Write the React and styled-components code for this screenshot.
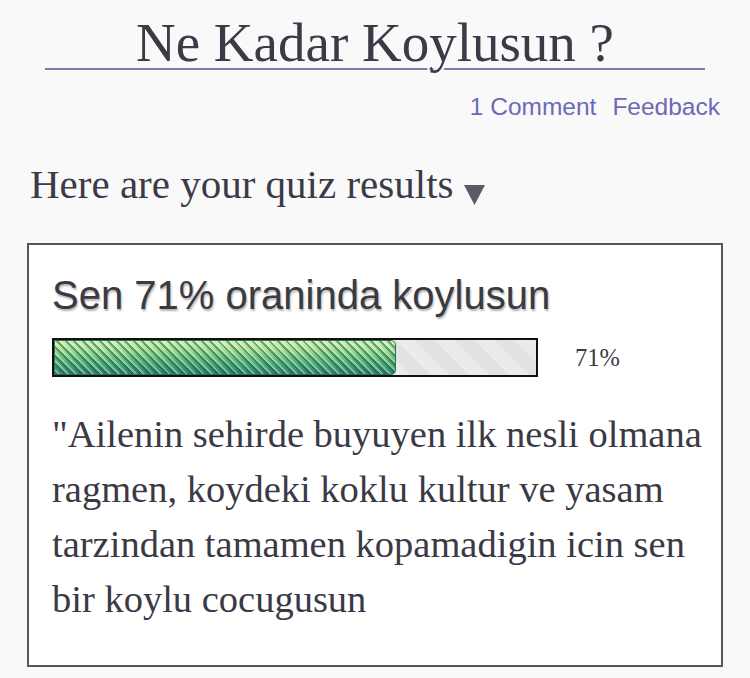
import styled, {createGlobalStyle} from "styled-components";

const GlobalStyle = createGlobalStyle`
    html, body {
        margin: 0;
        padding: 0;
        background: #f9f9fa;
    }
    body {
        font-family: "Liberation Serif", "Times New Roman", serif;
        color: #3b3a46;
    }
`;

const Page = styled.div`
    width: 750px;
    box-sizing: border-box;
    padding: 18px 27px 0 27px;
`;

const Title = styled.h1`
    margin: 0 18px;
    font-size: 55px;
    line-height: 50px;
    font-weight: normal;
    text-align: center;
    color: #3b3a46;
    border-bottom: 2px solid #7f7ca6;
    text-shadow: 3px 0 #f9f9fa, -3px 0 #f9f9fa;
`;

const Links = styled.div`
    margin-top: 22px;
    padding-right: 3px;
    display: flex;
    justify-content: flex-end;
    gap: 16px;
    font-family: "Liberation Sans", Arial, sans-serif;
    font-size: 24.5px;
    line-height: 30px;
    a {
        color: #6c69b4;
        text-decoration: none;
    }
`;

const ResultsHeading = styled.h2`
    margin: 38px 0 0 3px;
    font-size: 41px;
    line-height: 48px;
    font-weight: normal;
    color: #3b3a46;
`;

const Caret = styled.svg`
    margin-left: 10px;
    vertical-align: -7px;
`;

const ResultBox = styled.div`
    margin-top: 35px;
    background: #fff;
    border: 2px solid #57545f;
    padding: 28px 23px 38px 23px;
`;

const ResultTitle = styled.div`
    font-family: "Liberation Sans", Arial, sans-serif;
    font-size: 40px;
    line-height: 44px;
    color: #3a3a42;
    text-shadow: 1px 2px 2px #b5b5b5;
`;

const BarRow = styled.div`
    margin-top: 21px;
    display: flex;
    align-items: center;
    gap: 37px;
`;

const Bar = styled.div`
    width: 486px;
    height: 39px;
    box-sizing: border-box;
    border: 2px solid #111;
    background-color: #e2e2e2;
    background-image: repeating-linear-gradient(
        45deg,
        #e2e2e2 0 14px,
        #ebebeb 14px 28px
    );
    display: flex;
`;

const Fill = styled.div`
    height: 100%;
    box-sizing: border-box;
    border: 1px solid #2f6f55;
    border-radius: 0 5px 5px 0;
    background-image:
        repeating-linear-gradient(
            45deg,
            rgba(20, 90, 50, 0.5) 0 2px,
            rgba(255, 255, 230, 0.35) 2px 4px,
            rgba(255, 255, 255, 0) 4px 6px
        ),
        linear-gradient(
            to bottom,
            #d3f2b4 0%,
            #a4dd96 25%,
            #5db87c 55%,
            #3b9a7a 80%,
            #2e7f78 100%
        );
`;

const Percent = styled.span`
    font-size: 24.5px;
    color: #3b3a46;
`;

const Description = styled.p`
    margin: 30px 0 0 0;
    font-size: 38.5px;
    line-height: 55px;
    white-space: nowrap;
    color: #3a3944;
`;

const App = () => {
    const score = 71;

    return (
        <>
            <GlobalStyle />
            <Page>
                <Title>Ne Kadar Koylusun ?</Title>
                <Links>
                    <a href="#comments">1 Comment</a>
                    <a href="#feedback">Feedback</a>
                </Links>
                <ResultsHeading>
                    Here are your quiz results
                    <Caret width="21" height="20" viewBox="0 0 21 20">
                        <polygon points="0,0 21,0 10.5,20" fill="#5b5a66" />
                    </Caret>
                </ResultsHeading>
                <ResultBox>
                    <ResultTitle>Sen {score}% oraninda koylusun</ResultTitle>
                    <BarRow>
                        <Bar>
                            <Fill style={{width: `${score}%`}} />
                        </Bar>
                        <Percent>{score}%</Percent>
                    </BarRow>
                    <Description>
                        "Ailenin sehirde buyuyen ilk nesli olmana<br />
                        ragmen, koydeki koklu kultur ve yasam<br />
                        tarzindan tamamen kopamadigin icin sen<br />
                        bir koylu cocugusun
                    </Description>
                </ResultBox>
            </Page>
        </>
    );
};

export default App;
